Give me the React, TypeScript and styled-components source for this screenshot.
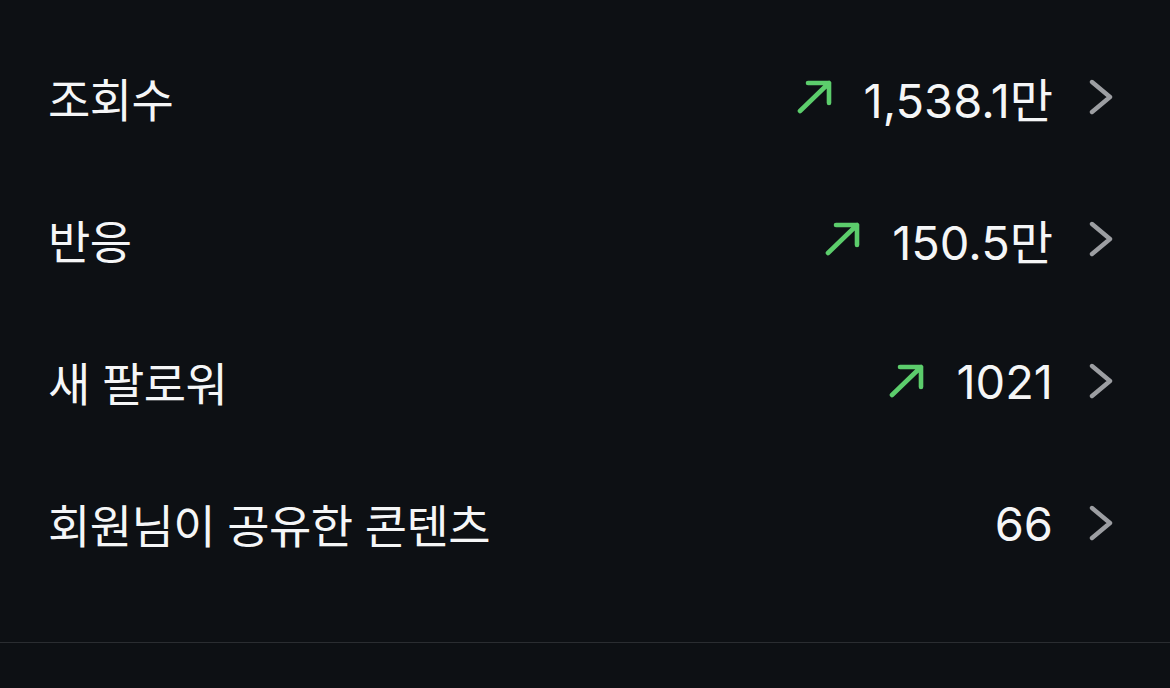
import styled, { createGlobalStyle } from "styled-components";

type Stat = {
  label: string;
  value: string;
  trending?: boolean;
};

const stats: Stat[] = [
  { label: "조회수", value: "1,538.1만", trending: true },
  { label: "반응", value: "150.5만", trending: true },
  { label: "새 팔로워", value: "1021", trending: true },
  { label: "회원님이 공유한 콘텐츠", value: "66" },
];

export default function App() {
  return (
    <>
      <GlobalStyle />
      <Screen>
        <StatList>
          {stats.map((stat) => (
            <StatRow key={stat.label}>
              <Label>{stat.label}</Label>
              <ValueGroup>
                {stat.trending && <TrendArrow />}
                <Value>{stat.value}</Value>
                <Chevron />
              </ValueGroup>
            </StatRow>
          ))}
        </StatList>
        <Divider />
      </Screen>
    </>
  );
}

function TrendArrow() {
  return (
    <ArrowIcon viewBox="0 0 36 34" fill="none">
      <path
        d="M3 31 L32 3 M11 3 H32 V23"
        stroke="#5ccd6c"
        strokeWidth="4.6"
        strokeLinecap="round"
        strokeLinejoin="round"
      />
    </ArrowIcon>
  );
}

function Chevron() {
  return (
    <ChevronIcon viewBox="0 0 24 36" fill="none">
      <path
        d="M3 3 L21 18 L3 33"
        stroke="#9c9ea2"
        strokeWidth="4.4"
        strokeLinecap="round"
        strokeLinejoin="round"
      />
    </ChevronIcon>
  );
}

const GlobalStyle = createGlobalStyle`
  html, body {
    margin: 0;
    padding: 0;
    background: #0d1014;
  }
`;

const Screen = styled.main`
  width: 1170px;
  height: 688px;
  background: #0d1014;
  font-family: "Inter", "Noto Sans CJK KR", sans-serif;
  color: #f5f6f7;
  overflow: hidden;
`;

const StatList = styled.ul`
  list-style: none;
  margin: 0;
  padding: 26px 57px 48px 48px;
`;

const StatRow = styled.li`
  display: flex;
  align-items: center;
  justify-content: space-between;
  height: 142px;
`;

const Label = styled.span`
  font-size: 46px;
  font-weight: 400;
  letter-spacing: -0.6px;
`;

const ValueGroup = styled.div`
  display: flex;
  align-items: center;
`;

const Value = styled.span`
  font-size: 47px;
  font-weight: 400;
  letter-spacing: 0;
  margin-right: 36px;
`;

const ArrowIcon = styled.svg`
  width: 36px;
  height: 34px;
  margin-right: 31px;
`;

const ChevronIcon = styled.svg`
  width: 24px;
  height: 36px;
`;

const Divider = styled.hr`
  margin: 0;
  border: 0;
  height: 1px;
  background: #2a2d31;
`;
